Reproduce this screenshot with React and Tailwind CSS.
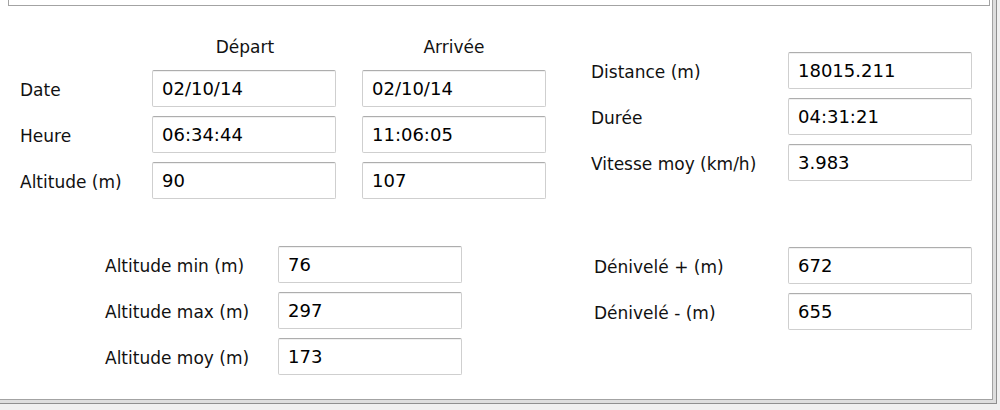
import React from "react";

const font = { fontFamily: '"DejaVu Sans", Verdana, sans-serif' };

function Field({ value }) {
  return (
    <div className="flex h-[37px] w-[184px] items-center rounded-[2px] border border-[#cfcfcf] border-t-[#adadad] bg-white pl-[9px] text-[18px] text-black shadow-[inset_0_1px_0_#f0f0f0]">
      {value}
    </div>
  );
}

function Row({ label, labelW, children }) {
  return (
    <div className="flex items-center">
      <div className={labelW + " pt-[4px] text-[17px] text-[#111111]"}>{label}</div>
      {children}
    </div>
  );
}

export default function App() {
  return (
    <div className="h-[410px] w-[1000px] bg-[#f0f0f0]" style={font}>
      <div className="h-[404px] w-[997px] border-b border-r border-[#8f8f8f] bg-[#dedede]">
        <div className="h-[400px] w-[993px] border-b border-r border-[#a3a3a3] bg-white">
          <div className="ml-[8px] h-[6px] w-[982px] border-x border-b border-[#a3a3a3]" />

          <div className="flex items-start">
            <div className="w-[591px] pl-[20px] pt-[30px]">
              <div className="flex h-[24px] items-center text-[17px] text-[#111111]">
                <div className="w-[132px]" />
                <div className="w-[184px] pl-[2px] text-center">Départ</div>
                <div className="w-[26px]" />
                <div className="w-[184px] text-center">Arrivée</div>
              </div>
              <div className="mt-[10px] flex flex-col gap-[9px]">
                <Row label="Date" labelW="w-[132px]">
                  <Field value="02/10/14" />
                  <div className="w-[26px]" />
                  <Field value="02/10/14" />
                </Row>
                <Row label="Heure" labelW="w-[132px]">
                  <Field value="06:34:44" />
                  <div className="w-[26px]" />
                  <Field value="11:06:05" />
                </Row>
                <Row label="Altitude (m)" labelW="w-[132px]">
                  <Field value="90" />
                  <div className="w-[26px]" />
                  <Field value="107" />
                </Row>
              </div>
            </div>

            <div className="flex flex-col gap-[9px] pt-[46px]">
              <Row label="Distance (m)" labelW="w-[197px]">
                <Field value="18015.211" />
              </Row>
              <Row label="Durée" labelW="w-[197px]">
                <Field value="04:31:21" />
              </Row>
              <Row label="Vitesse moy (km/h)" labelW="w-[197px]">
                <Field value="3.983" />
              </Row>
            </div>
          </div>

          <div className="mt-[47px] flex items-start">
            <div className="ml-[105px] flex w-[489px] flex-col gap-[9px]">
              <Row label="Altitude min (m)" labelW="w-[173px]">
                <Field value="76" />
              </Row>
              <Row label="Altitude max (m)" labelW="w-[173px]">
                <Field value="297" />
              </Row>
              <Row label="Altitude moy (m)" labelW="w-[173px]">
                <Field value="173" />
              </Row>
            </div>
            <div className="flex flex-col gap-[9px] pt-[1px]">
              <Row label="Dénivelé + (m)" labelW="w-[194px]">
                <Field value="672" />
              </Row>
              <Row label="Dénivelé - (m)" labelW="w-[194px]">
                <Field value="655" />
              </Row>
            </div>
          </div>
        </div>
      </div>
    </div>
  );
}
